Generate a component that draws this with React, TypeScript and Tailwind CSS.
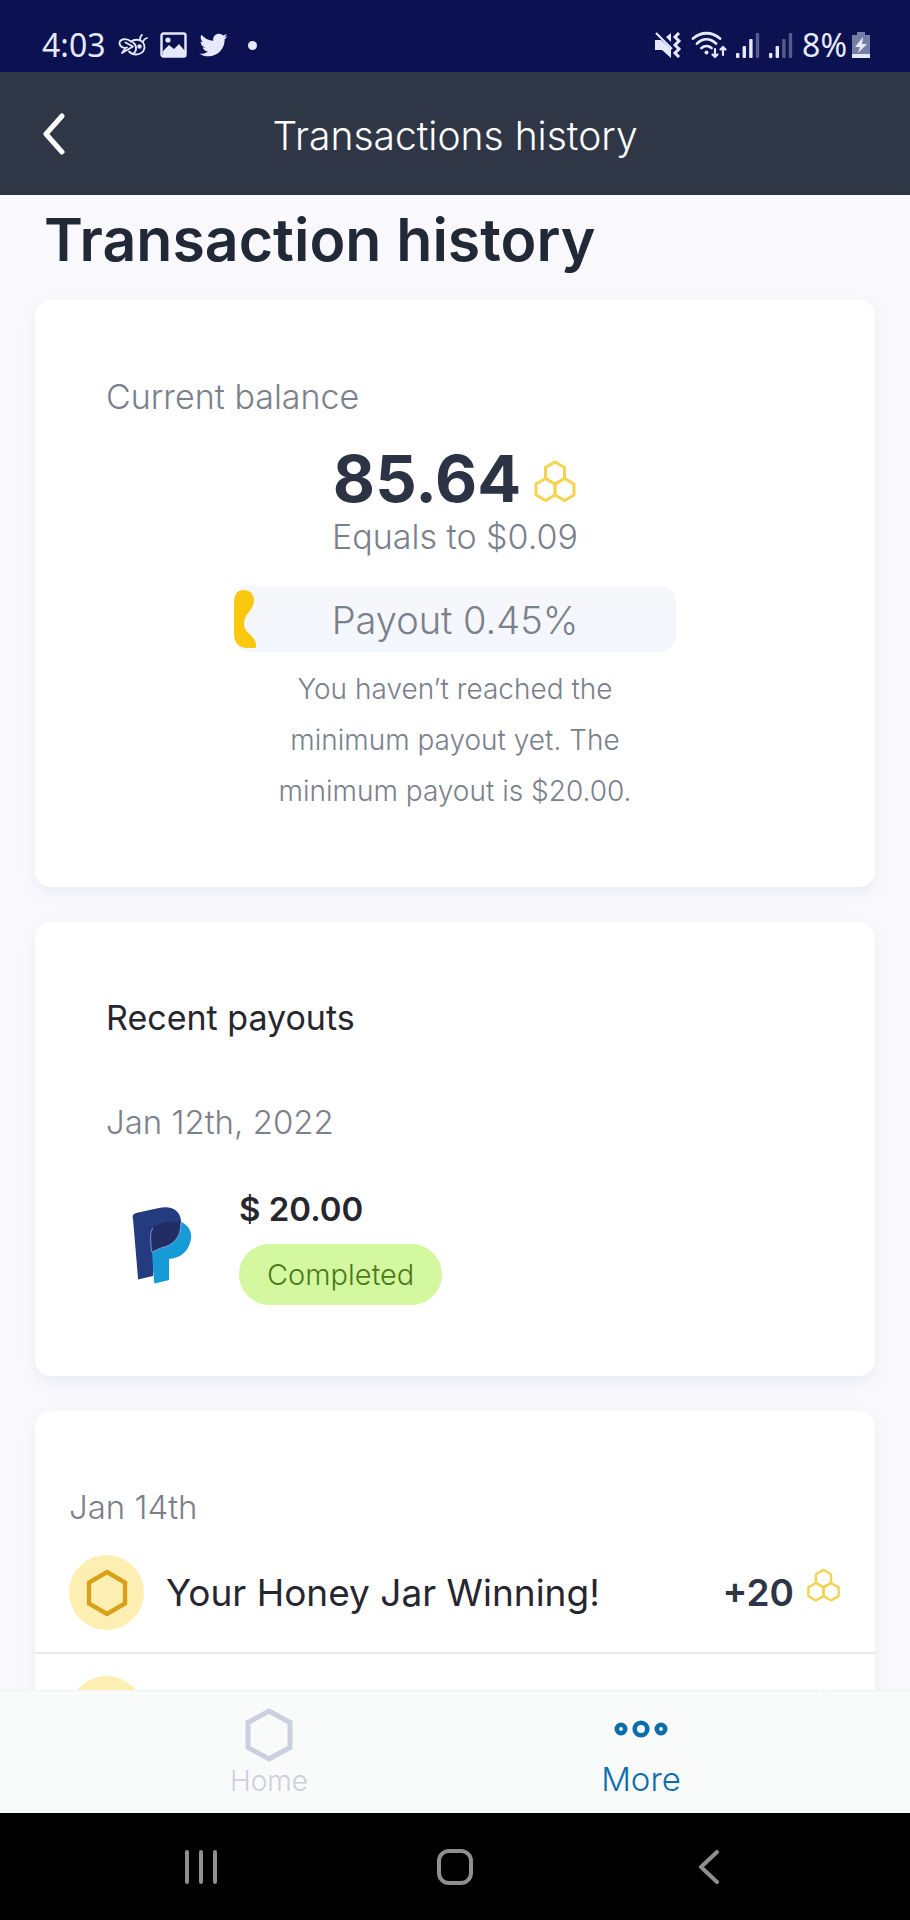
import { FaTwitter } from "react-icons/fa";
import { ReactNode } from "react";

const HEX = "M12 1.5 21 6.8V17.2L12 22.5 3 17.2V6.8Z";

function Honeycomb({ className }: { className: string }) {
    return (
        <svg viewBox="0 0 44 42" className={className} fill="none" stroke="currentColor" strokeWidth="3" strokeLinejoin="round">
            <path d="M22 2 31.5 7.5V18.5L22 24 12.5 18.5V7.5Z" />
            <path d="M12.5 18.5 22 24V35L12.5 40.5 3 35V24Z" />
            <path d="M31.5 18.5 41 24V35L31.5 40.5 22 35V24Z" />
        </svg>
    );
}

function PayPalLogo() {
    return (
        <svg viewBox="0 0 60 78" className="mb-1 h-[78px] w-[60px]">
            <path d="M1 13C0 10 1 8 4 7L27 2C41-1 50 6 49 18 48 30 42 38 23 43L21 70 8 73C6 74 6 73 6 72Z" fill="#253b80" />
            <path d="M49 16C56 19 60 25 59 33 57 44 50 52 37 53V74L25 77C23 78 22 77 22 75L20 46Z" fill="#179bd7" />
            <path d="M48 16C36 15 19 17 19 28L20 46 29 42C42 39 50 30 48 16Z" fill="#222d65" />
            <path d="M19.5 46C19 36 17 27 21 22M20 46 29 42C42 39 49 31 49 17" fill="none" stroke="#8fa6d6" strokeWidth="0.8" />
        </svg>
    );
}

function SignalBars({ level }: { level: number }) {
    return (
        <svg viewBox="0 0 24 26" className="h-[26px] w-6" fill="currentColor">
            {[5, 12, 19, 25].map((height, i) => (
                <rect key={height} x={i * 6.6} y={26 - height} width="3.4" height={height} rx="1" opacity={i < level ? 1 : 0.35} />
            ))}
        </svg>
    );
}

function StatusBar() {
    return (
        <div className="flex h-[72px] shrink-0 items-end justify-between bg-[#0b1151] pr-10 pb-[9px] pl-[42px] text-[#e6e9fb]">
            <div className="flex items-center gap-3">
                <span className="font-[Noto_Sans] text-[32px] leading-9">4:03</span>
                {/* bee */}
                <svg viewBox="0 0 30 24" className="h-6 w-[30px]" fill="none" stroke="currentColor" strokeWidth="1.8" strokeLinecap="round" strokeLinejoin="round">
                    <path d="M13 8.5C17 5.5 26 6 26.5 14 26.500 19 22 21.500 18 21.500 15 21.500 12.500 20 11 18.500" />
                    <path d="M15 9.500C19 12 19 18 15.500 20.500" />
                    <path d="M13 8.5C9 5 2 5.500 1.500 10 1.500 14 6 15.500 9 14.500" />
                    <path d="M7.500 9.500 15 13.500 4 20 7.500 15" />
                    <circle cx="21.500" cy="13.500" r="2.200" fill="currentColor" stroke="none" />
                    <path d="M22 7C22 4.500 22.500 3 24 2M25 8.500C26 6.500 27 5.500 29 5" />
                </svg>
                <svg viewBox="0 0 27 26" className="h-[26px] w-[27px]">
                    <rect x="1.5" y="1.5" width="24" height="23" rx="2" fill="none" stroke="currentColor" strokeWidth="2.4" />
                    <path d="M3 19 9 13l5 4 5-5 6 7v5H3Z" fill="currentColor" />
                    <circle cx="8" cy="8" r="2.6" fill="currentColor" />
                </svg>
                <FaTwitter className="h-7 w-[29px]" />
                <span className="ml-2 size-[9px] rounded-full bg-[#e6e9fb]" />
            </div>
            <div className="flex items-center gap-[9px]">
                <svg viewBox="0 0 28 26" className="h-[26px] w-7" fill="currentColor">
                    <path d="M1 8h6l10 9v9L8 18H1Z" />
                    <path d="M12 5 17 1v9Z" />
                    <path d="M2 1 18 17" stroke="currentColor" strokeWidth="2.2" />
                    <path d="m25 1-4 4 4 4-4 4 4 4-4 4 4 4" fill="none" stroke="currentColor" strokeWidth="3" />
                </svg>
                <svg viewBox="0 0 36 28" className="h-7 w-9" fill="none" stroke="currentColor" strokeWidth="2.8" strokeLinecap="round">
                    <path d="M2 7.5C10 .5 21 .5 29 7.5M6 12.5C12 7 19 7 25 12.5M10.5 17c3-2.6 7-2.6 10 0" />
                    <circle cx="15.5" cy="21.5" r="2" fill="currentColor" stroke="none" />
                    <path d="M24 18v8m-2.5-2.5L24 26l2.5-2.5M32 24v-8m-2.5 2.5L32 16l2.500 2.5" strokeWidth="2.2" />
                </svg>
                <SignalBars level={3} />
                <SignalBars level={2} />
                <div className="flex items-center gap-[5px]">
                    <span className="font-[Noto_Sans] text-[32px] leading-9">8%</span>
                    <svg viewBox="0 0 18 28" className="h-7 w-[18px]" fill="currentColor">
                        <path d="M5 1h8v3h5v23H0V4h5Z" opacity="0.5" />
                        <path d="M0 23h18v4H0Z" />
                        <path d="M11 6 3 16h5l-2 6 9-9h-5Z" />
                    </svg>
                </div>
            </div>
        </div>
    );
}

function Card({ children, className = "" }: { children: ReactNode; className?: string }) {
    return (
        <section className={`rounded-2xl bg-white shadow-[0_6px_16px_rgba(60,70,130,0.08)] ${className}`}>
            {children}
        </section>
    );
}

function TransactionRow({ title, amount }: { title?: string; amount?: string }) {
    return (
        <li className="flex items-center border-b-2 border-[#e9e9ed] px-[34px] py-[22px]">
            <span className="flex size-[75px] items-center justify-center rounded-full bg-[#fdeeb2] text-[#d9a11b]">
                <svg viewBox="0 0 24 24" className="size-12" fill="none" stroke="currentColor" strokeWidth="2.2">
                    <path d={HEX} />
                </svg>
            </span>
            <span className="ml-[22px] flex-1 text-[37px] leading-[48px] text-[#26262f]">{title}</span>
            <span className="text-[37px] leading-[48px] font-semibold text-[#2d3546]">{amount}</span>
            <Honeycomb className="mb-4 ml-3 h-[34px] w-[35px] text-[#f3d352]" />
        </li>
    );
}

export default function App() {
    return (
        <div className="flex h-screen flex-col bg-[#f9f9fd] font-[Inter,sans-serif]">
            <StatusBar />

            <header className="grid h-[123px] shrink-0 grid-cols-[80px_1fr_80px] items-center bg-[#2f3646] text-white">
                <button aria-label="Back" className="flex justify-center pl-7">
                    <svg viewBox="0 0 24 42" className="h-[42px] w-6" fill="none" stroke="currentColor" strokeWidth="5" strokeLinecap="round" strokeLinejoin="round">
                        <path d="M20 3 4 21 20 39" />
                    </svg>
                </button>
                <div className="pt-1 text-center text-[39px] leading-[48px] font-light">Transactions history</div>
            </header>

            <main className="min-h-0 flex-1 overflow-y-auto px-[35px] [scrollbar-width:none]">
                <h1 className="mt-[9px] mb-6 px-[9px] text-[59px] leading-[72px] font-semibold text-[#212836]">Transaction history</h1>

                <Card className="px-[71px] pt-[76px] pb-[70px]">
                    <h2 className="text-[34px] leading-[42px] font-light text-[#7b808b]">Current balance</h2>
                    <div className="mt-[25px] flex items-center justify-center gap-3">
                        <span className="text-[65px] leading-[72px] font-bold text-[#2b3344]">85.64</span>
                        <Honeycomb className="mt-1 h-[42px] w-[44px] text-[#f5d34f]" />
                    </div>
                    <p className="text-center text-[34px] leading-[44px] font-light text-[#7b808b]">Equals to $0.09</p>
                    <div className="relative mx-auto mt-[27px] h-[66px] w-[442px] rounded-2xl bg-linear-to-b from-[#f7f7fb] to-[#f3f7fe] text-center text-[38px] leading-[68px] font-light text-[#7b808b]">
                        <svg viewBox="0 0 23 58" className="absolute top-1 left-0 h-[58px] w-[23px] text-[#fac90f]" fill="currentColor">
                            <path d="M9 0C16 0 20 4 20 10 20 21 10 23 10 34 10 44 23 45 22 57 22 58 21 58 20 58H13C5 58 0 52 0 44V12C0 5 3 0 9 0Z" />
                        </svg>
                        Payout 0.45%
                    </div>
                    <p className="mx-auto mt-3 w-[390px] text-center text-[28px] leading-[51px] font-light text-[#7b808b]">
                        You haven’t reached the minimum payout yet. The minimum payout is $20.00.
                    </p>
                </Card>

                <Card className="mt-[35px] px-[71px] pt-[75px] pb-[71px]">
                    <h2 className="text-[34px] leading-[42px] font-normal text-[#26262f]">Recent payouts</h2>
                    <p className="mt-[62px] text-[33px] leading-[42px] font-light text-[#7b808b]">Jan 12th, 2022</p>
                    <div className="mt-[45px] flex items-center pl-[26px]">
                        <PayPalLogo />
                        <div className="ml-[47px]">
                            <p className="text-[33px] leading-[42px] font-semibold text-[#26262f]">$ 20.00</p>
                            <span className="mt-[14px] block rounded-full bg-[#d3f89f] px-7 text-[29px] leading-[61px] font-light text-[#4b7a1a]">Completed</span>
                        </div>
                    </div>
                </Card>

                <Card className="mt-[35px] pt-[75px]">
                    <h2 className="px-[34px] text-[33px] leading-[42px] font-light text-[#7b808b]">Jan 14th</h2>
                    <ul className="mt-[5px]">
                        <TransactionRow title="Your Honey Jar Winning!" amount="+20" />
                        <TransactionRow />
                    </ul>
                </Card>
            </main>

            <nav className="grid h-[123px] shrink-0 grid-cols-2 border-t border-[#f1f2f4] bg-[#f9fafa] px-[83px] leading-9">
                <a href="#home" className="flex flex-col items-center pt-4 text-[28px] font-light text-[#cbd0de]">
                    <svg viewBox="0 0 50 56" className="h-14 w-[50px]" fill="none" stroke="currentColor" strokeWidth="5">
                        <path d="M25 4 46 15.5V40.5L25 52 4 40.5V15.5Z" />
                    </svg>
                    Home
                </a>
                <a href="#more" className="flex flex-col items-center pt-4 text-[33px] font-light text-[#0c6dab]">
                    <svg viewBox="0 0 54 18" className="mt-[13px] mb-[23px] h-[18px] w-[54px]" fill="none" stroke="currentColor" strokeWidth="4.6">
                        <circle cx="7" cy="9" r="4.2" />
                        <circle cx="27" cy="9" r="6.3" />
                        <circle cx="47" cy="9" r="4.2" />
                    </svg>
                    More
                </a>
            </nav>

            {/* Android navigation */}
            <div className="grid h-[107px] shrink-0 grid-cols-3 items-center justify-items-center bg-black px-[74px] text-[#8f8f8f]">
                <button aria-label="Recent apps">
                    <svg viewBox="0 0 34 34" className="size-[34px]" stroke="currentColor" strokeWidth="4" strokeLinecap="round">
                        <path d="M3 2v30M17 2v30M31 2v30" />
                    </svg>
                </button>
                <button aria-label="Home screen">
                    <svg viewBox="0 0 36 36" className="size-9" fill="none" stroke="currentColor" strokeWidth="4">
                        <rect x="2" y="2" width="32" height="32" rx="10" />
                    </svg>
                </button>
                <button aria-label="Go back">
                    <svg viewBox="0 0 22 34" className="h-[34px] w-[22px]" fill="none" stroke="currentColor" strokeWidth="4" strokeLinecap="round" strokeLinejoin="round">
                        <path d="M19 2 3 17 19 32" />
                    </svg>
                </button>
            </div>
        </div>
    );
}
